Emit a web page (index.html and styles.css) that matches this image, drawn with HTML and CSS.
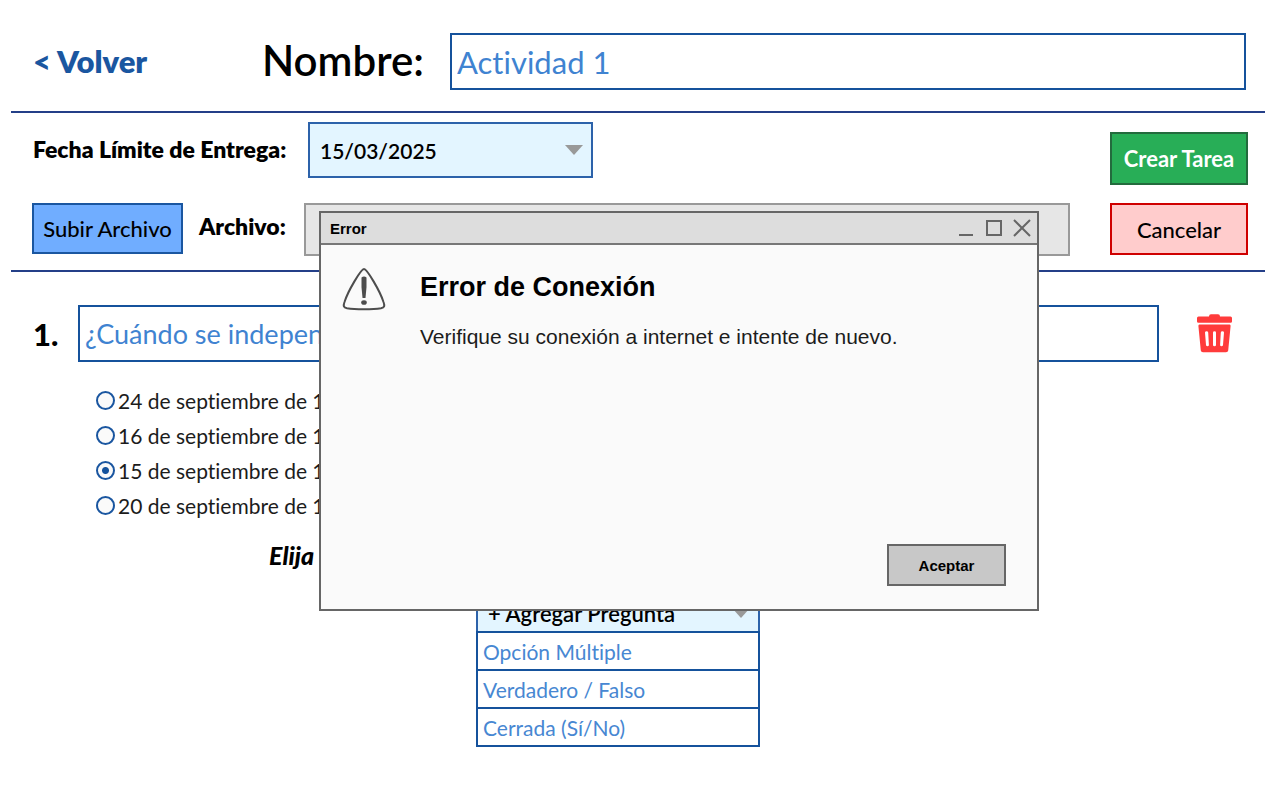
FILE: index.html
```html
<!DOCTYPE html>
<html lang="es">
<head>
<meta charset="utf-8">
<title>Crear Tarea</title>
<link rel="stylesheet" href="styles.css">
</head>
<body>
<main class="page">
  <header class="top">
    <a class="back" href="#">&lt; Volver</a>
    <label class="name-label" for="name">Nombre:</label>
    <input class="field name-field" id="name" type="text" value="Actividad 1">
  </header>

  <section class="toolbar">
    <div class="settings">
      <div class="row row-date">
        <label class="label" for="due">Fecha Límite de Entrega:</label>
        <div class="select">
          <select id="due"><option>15/03/2025</option></select>
        </div>
      </div>
      <div class="row row-file">
        <button class="btn btn-upload" type="button">Subir Archivo</button>
        <label class="label" for="file">Archivo:</label>
        <input class="file-field" id="file" type="text" readonly>
      </div>
    </div>
    <div class="actions">
      <button class="btn btn-create" type="button">Crear Tarea</button>
      <button class="btn btn-cancel" type="button">Cancelar</button>
    </div>
  </section>

  <section class="question">
    <div class="question-head">
      <label class="number" for="q1">1.</label>
      <input class="field question-field" id="q1" type="text" value="¿Cuándo se independizó?">
      <button class="trash" type="button" aria-label="Eliminar">
        <svg width="35" height="39" viewBox="0 0 35 39" fill="#ff3b3b">
          <path d="M1.500 2.500H12Q12 .3 14 .3H21Q23 .3 23 2.500H33.500Q35 2.500 35 4V7.500Q35 8.800 33.500 8.800H1.500Q0 8.800 0 7.500V4Q0 2.500 1.500 2.500Z"/>
          <path fill-rule="evenodd" d="M2.300 10.500H32.700Q33.700 10.500 33.600 12L31.200 36.500Q31 38.200 29 38.200H6Q4 38.200 3.800 36.500L1.400 12Q1.300 10.500 2.300 10.500ZM8 18.500L9 31Q9.200 32.200 10.500 32.200T11.900 31L11.200 18.500Q11 17.200 9.600 17.200T8 18.500ZM16 18.500V31Q16 32.200 17.500 32.200T19 31V18.500Q19 17.200 17.500 17.200T16 18.500ZM23.800 18.500L23.100 31Q23.100 32.200 24.500 32.200T26 31L27 18.500Q26.900 17.200 25.400 17.200T23.800 18.500Z"/>
        </svg>
      </button>
    </div>
    <div class="options">
      <label class="option"><input type="radio" name="q1a">24 de septiembre de 1821</label>
      <label class="option"><input type="radio" name="q1a">16 de septiembre de 1821</label>
      <label class="option"><input type="radio" name="q1a" checked>15 de septiembre de 1821</label>
      <label class="option"><input type="radio" name="q1a">20 de septiembre de 1821</label>
    </div>
    <p class="hint">Elija</p>
  </section>

  <div class="add">
    <div class="select">
      <select aria-label="Agregar pregunta"><option>+ Agregar Pregunta</option></select>
    </div>
    <div class="menu">
      <button type="button">Opción Múltiple</button>
      <button type="button">Verdadero / Falso</button>
      <button type="button">Cerrada (Sí/No)</button>
    </div>
  </div>
</main>

<div class="dialog" role="alertdialog" aria-labelledby="dialog-title">
  <div class="titlebar">
    <span>Error</span>
    <svg width="74" height="20" viewBox="0 0 74 20" fill="none" stroke="#666" stroke-width="2">
      <path d="M1 17H15M29 3H43V17H29ZM56 2L72 18M72 2L56 18"/>
    </svg>
  </div>
  <div class="dialog-body">
    <svg class="warn" width="44" height="44" viewBox="0 0 44 44" fill="none" stroke="#4d4d4d" stroke-width="2">
      <path d="M22 2C19 2 6 24 2.500 35C1 39 1.500 40.500 5 41.200C13 42.500 31 42.500 39 41.200C42.500 40.500 43 39 41.500 35C38 24 25 2 22 2Z"/>
      <path fill="#4d4d4d" stroke="none" d="M19.500 10.500Q22 8.500 24.500 10.500Q25 20 23.500 31H20.500Q19 20 19.500 10.500Z"/>
      <ellipse cx="22" cy="35.500" rx="2.800" ry="2.300" fill="#4d4d4d" stroke="none"/>
    </svg>
    <div class="message">
      <h1 id="dialog-title">Error de Conexión</h1>
      <p>Verifique su conexión a internet e intente de nuevo.</p>
    </div>
  </div>
  <div class="dialog-foot"><button class="accept" type="button">Aceptar</button></div>
</div>
</body>
</html>
```

FILE: styles.css
```css
* { box-sizing: border-box; }
body { margin: 0; background: #fff; color: #000; font-family: Lato, sans-serif; font-variant-ligatures: none; }
button, input, select { font-family: inherit; font-variant-ligatures: inherit; margin: 0; border-radius: 0; }
button { cursor: pointer; }

.page { padding: 0 15px 0 11px; }
.top { display: flex; align-items: center; padding: 33px 19px 21px 22px; }
.back { width: 229px; padding-bottom: 2px; color: #1a56a0; font-size: 31px; font-weight: 800; text-decoration: none; }
.name-label { width: 188px; padding-bottom: 4px; font-size: 42px; line-height: 52px; font-weight: 600; }
.field { min-width: 0; height: 57px; padding: 0 5px; border: 2px solid #15529c; background: #fff; color: #3f83d1; }
.name-field { flex: 1; font-size: 31px; }

.toolbar { display: flex; gap: 40px; padding: 9px 17px 14px 21px; border-top: 2px solid #243f88; border-bottom: 2px solid #243f88; }
.settings { flex: 1; display: flex; flex-direction: column; gap: 25px; }
.row { display: flex; align-items: center; }
.row-file { align-items: flex-start; }
.row .label { font-size: 23px; font-weight: 800; }
.row-date .label { width: 276px; padding: 0 0 2px 1px; }
.row-file .label { width: 105px; line-height: 47px; }
.select { position: relative; width: 285px; }
.select select { display: block; width: 100%; height: 56px; padding: 0 10px; appearance: none; border: 2px solid #2c62aa; background: #e3f5ff; color: #000; font-size: 21px; font-weight: 600; }
.select::after { content: ""; position: absolute; right: 10px; top: calc(50% - 5px); width: 18px; height: 10px; background: #999; clip-path: polygon(0 0, 100% 0, 50% 100%); pointer-events: none; }
.btn { height: 52px; padding: 0; border: 2px solid; font-size: 22px; font-weight: 500; color: #000; }
.btn-upload { width: 151px; height: 51px; margin-right: 16px; border-color: #1a56a0; background: #70adff; }
.file-field { flex: 1; min-width: 0; height: 53px; border: 2px solid #999; background: #e6e6e6; }
.actions { width: 138px; display: flex; flex-direction: column; justify-content: flex-end; gap: 18px; padding-bottom: 1px; }
.btn-create { height: 53px; border-color: #236b3d; background: #28ae57; color: #fff; font-weight: 700; }
.btn-cancel { border-color: #cf0000; background: #ffcccc; }

.question { padding: 33px 33px 0 22px; }
.question-head { display: flex; align-items: center; }
.number { width: 45px; font-size: 31px; font-weight: 900; }
.question-field { flex: 1; font-size: 27px; }
.trash { display: flex; margin-left: 38px; padding: 0; border: 0; background: none; }
.options { display: flex; flex-direction: column; padding: 21px 0 0 63px; }
.option { display: flex; align-items: center; gap: 3px; height: 35px; color: #1c1c1c; font-size: 21px; }
.option input { appearance: none; width: 19px; height: 19px; border: 2px solid #1a56a0; border-radius: 50%; background: #fafafa; }
.option input:checked { background: radial-gradient(circle, #15529c 3px, #fafafa 4px); }
.hint { margin: 17px 0 0 236px; font-size: 25px; line-height: 30px; font-weight: 900; font-style: italic; }

.add { width: 285px; margin: 23px auto 0 465px; }
.add .select { width: 284px; }
.add select { height: 40px; font-size: 22px; }
.menu { display: flex; flex-direction: column; }
.menu button { width: 284px; height: 40px; margin-top: -2px; padding: 0 5px; border: 2px solid #15529c; background: #fff; color: #4787d2; font-size: 21px; text-align: left; position: relative; }

.dialog { position: absolute; left: 319px; top: 211px; width: 720px; min-height: 400px; display: flex; flex-direction: column; border: 2px solid #666; background: #fafafa; font-family: "Liberation Sans", Arial, sans-serif; }
.titlebar { display: flex; align-items: center; justify-content: space-between; height: 32px; padding: 0 5px 0 9px; border-bottom: 2px solid #777; background: #ddd; font-size: 15px; font-weight: 700; }
.dialog-body { flex: 1; display: flex; gap: 34px; padding: 22px 20px 0 21px; }
.message { padding-top: 2px; }
.message h1 { margin: 0; font-size: 27px; line-height: 36px; }
.message p { margin: 20px 0 0; font-size: 21px; line-height: 24px; color: #1c1c1c; }
.dialog-foot { display: flex; justify-content: flex-end; padding: 0 31px 23px; }
.accept { width: 119px; height: 42px; padding: 0; border: 2px solid #666; background: #c8c8c8; color: #000; font-size: 15px; font-weight: 700; }
```
